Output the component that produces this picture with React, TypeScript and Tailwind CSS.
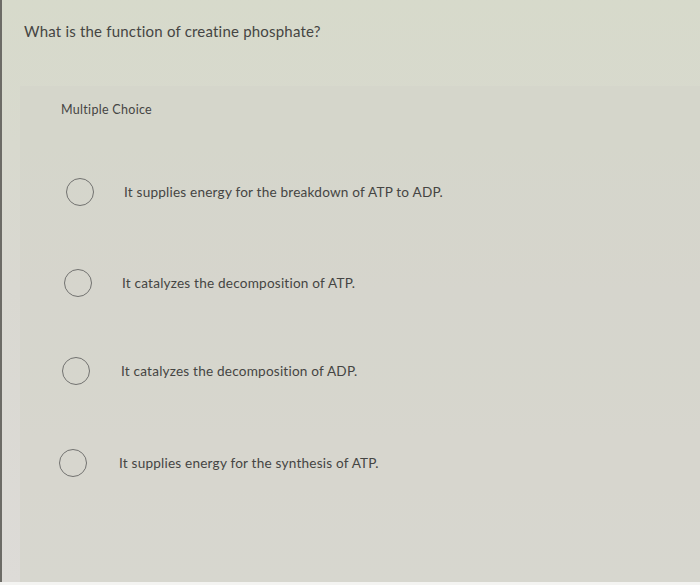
import React from "react";

const options = [
  { text: "It supplies energy for the breakdown of ATP to ADP.", pl: "pl-[46px]", gap: "gap-[30px]", h: "h-[90px]" },
  { text: "It catalyzes the decomposition of ATP.", pl: "pl-[44px]", gap: "gap-[30px]", h: "h-[92px]" },
  { text: "It catalyzes the decomposition of ADP.", pl: "pl-[42px]", gap: "gap-[31px]", h: "h-[84px]" },
  { text: "It supplies energy for the synthesis of ATP.", pl: "pl-[39px]", gap: "gap-[32px]", h: "h-[100px]" },
];

export default function App() {
  return (
    <div
      className="w-[700px] h-[585px] overflow-hidden flex flex-col bg-[#dcdbd5] text-[#454543]"
      style={{ fontFamily: "Lato, 'Liberation Sans', sans-serif" }}
    >
      <div className="flex flex-1 min-h-0">
        <div className="w-[2px] bg-[#6c6b66]" />
        <div className="flex-1 flex flex-col bg-gradient-to-b from-[#d7dacb] via-[#d9d8d1] to-[#dddbd7]">
          <div className="h-[86px] pl-[22px] pt-[20px] text-[15px] tracking-[0.2px]">
            What is the function of creatine phosphate?
          </div>
          <div className="ml-[18px] flex-1 flex flex-col bg-[#d3d3c9]/60">
            <div className="h-[61px] pl-[41px] pt-[15px] text-[12.5px] tracking-[0.3px]">
              Multiple Choice
            </div>
            {options.map((o, i) => (
              <div key={i} className={`flex items-center ${o.h} ${o.pl} ${o.gap}`}>
                <span className="w-[28px] h-[28px] rounded-full border-[1.5px] border-[#727270] shrink-0" />
                <span className="text-[13.6px] tracking-[0.2px]">{o.text}</span>
              </div>
            ))}
            <div className="flex-1" />
          </div>
        </div>
      </div>
      <div className="h-[3px] bg-[#f4f4f2]" />
    </div>
  );
}
